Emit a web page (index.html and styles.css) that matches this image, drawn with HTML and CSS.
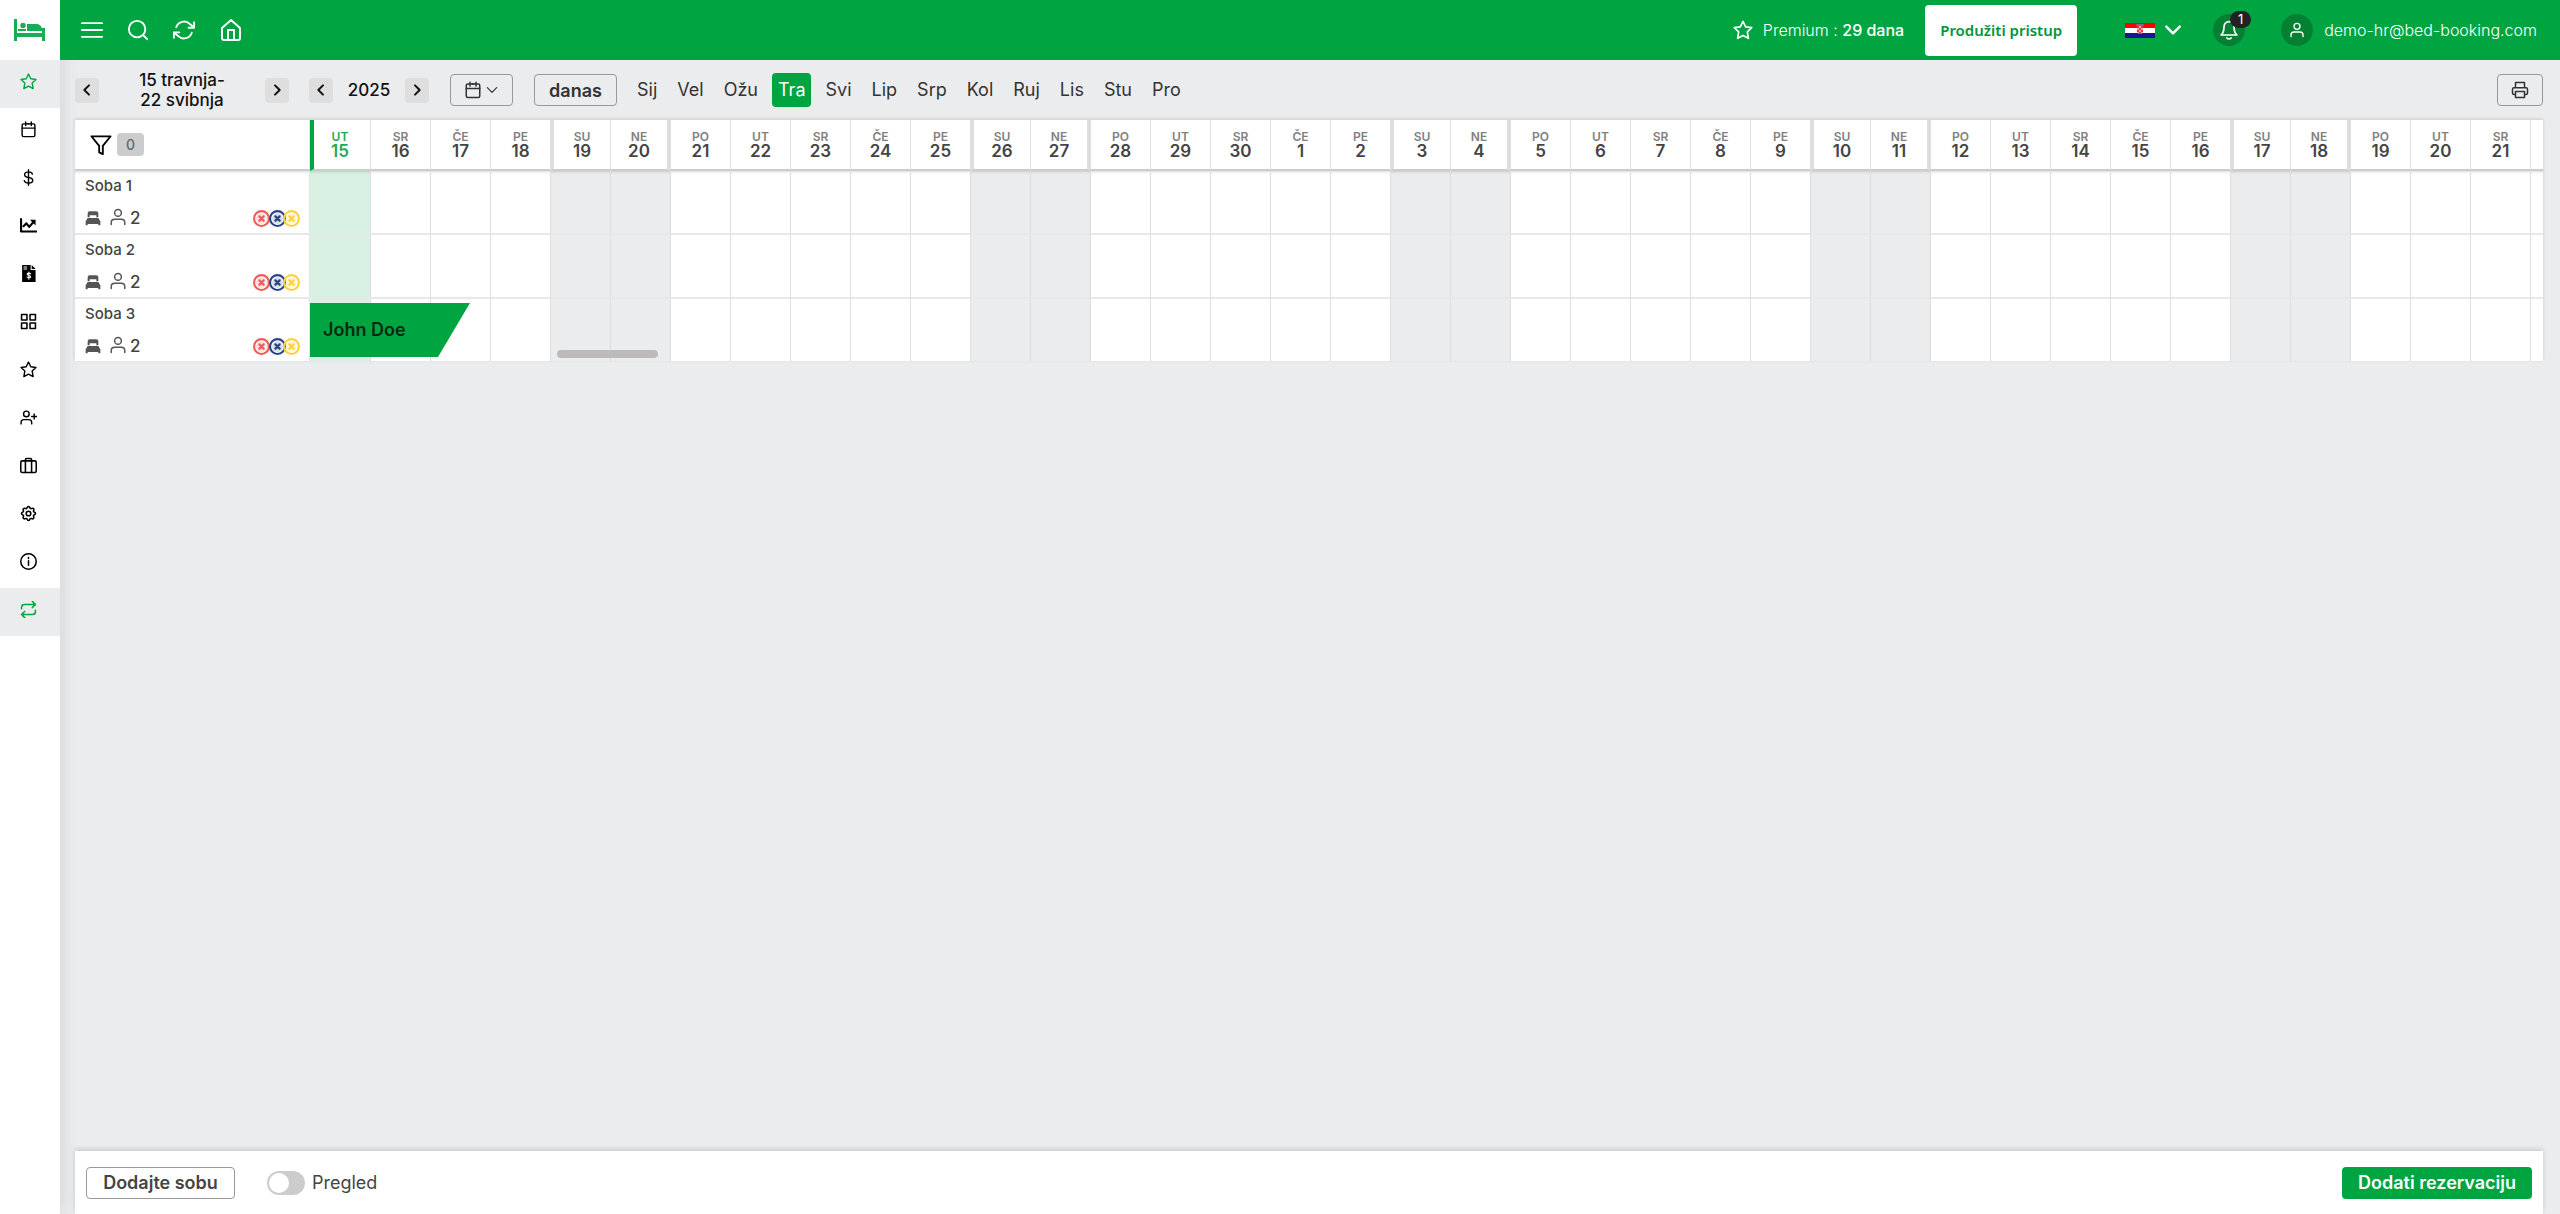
FILE: index.html
```
<!DOCTYPE html>
<html lang="hr">
<head>
  <meta charset="UTF-8">
  <meta name="viewport" content="width=device-width, initial-scale=1">
  <title>Bed Booking – Kalendar</title>
  <link rel="stylesheet" href="styles.css">
</head>
<body>

<aside class="sidebar">
  <a href="#" class="logo" aria-label="Bed Booking">
    <svg width="32" height="22" viewBox="0 0 32 22"><path d="M0 0h3v14h25V9h3v13h-3v-4H3v4H0zM4 10h8v2H4zM13 5h9c3 0 6 2 6 5v2H13z" fill="#1aac52"/><circle cx="9" cy="6.500" r="2.700" fill="#1aac52"/></svg>
  </a>
  <nav class="menu">
    <a href="#" class="active" aria-label="Novosti"><svg class="icon"><use href="#i-star"/></svg></a>
    <a href="#" aria-label="Kalendar"><svg class="icon"><use href="#i-calendar"/></svg></a>
    <a href="#" aria-label="Financije"><svg class="icon"><use href="#i-dollar"/></svg></a>
    <a href="#" aria-label="Statistika"><svg class="icon"><use href="#i-chart"/></svg></a>
    <a href="#" aria-label="Računi"><svg class="icon"><use href="#i-invoice"/></svg></a>
    <a href="#" aria-label="Objekti"><svg class="icon"><use href="#i-grid"/></svg></a>
    <a href="#" aria-label="Recenzije"><svg class="icon"><use href="#i-star"/></svg></a>
    <a href="#" aria-label="Gosti"><svg class="icon"><use href="#i-user-plus"/></svg></a>
    <a href="#" aria-label="Usluge"><svg class="icon"><use href="#i-case"/></svg></a>
    <a href="#" aria-label="Postavke"><svg class="icon"><use href="#i-gear"/></svg></a>
    <a href="#" aria-label="Informacije"><svg class="icon"><use href="#i-info"/></svg></a>
    <a href="#" class="active" aria-label="Sinkronizacija"><svg class="icon"><use href="#i-repeat"/></svg></a>
  </nav>
</aside>

<div class="page">
  <header class="topbar">
    <div class="top-left">
      <button aria-label="Izbornik"><svg width="22" height="22"><use href="#i-menu"/></svg></button>
      <button aria-label="Traži"><svg width="22" height="22"><use href="#i-search"/></svg></button>
      <button aria-label="Osvježi"><svg width="22" height="22"><use href="#i-refresh"/></svg></button>
      <button aria-label="Početna"><svg width="24" height="24"><use href="#i-home"/></svg></button>
    </div>
    <div class="top-right">
      <svg width="20" height="20"><use href="#i-star"/></svg>
      <span class="premium">Premium : <b>29 dana</b></span>
      <button class="extend">Produžiti pristup</button>
      <button class="lang" aria-label="Jezik">
        <svg width="30" height="15" viewBox="0 0 30 15"><path fill="#f00" d="M0 0h30v5H0z"/><path fill="#fff" d="M0 5h30v5H0z"/><path fill="#171796" d="M0 10h30v5H0z"/><path fill="#f6a5a5" d="M12 3h6v6q-1 2-3 2t-3-2z"/><path fill="#e33" d="M12 3h2v2h-2zM16 3h2v2h-2zM14 5h2v2h-2zM12 7h2v2h-2zM16 7h2v2h-2zM14 9h2v2h-2z"/><path d="M12 2h6" stroke="#7a6a90" stroke-width="2"/></svg>
        <svg width="20" height="20"><use href="#i-down"/></svg>
      </button>
      <button class="round bell" aria-label="Obavijesti"><svg width="20" height="20"><use href="#i-bell"/></svg><span class="count">1</span></button>
      <a href="#" class="account"><span class="round"><svg width="16" height="16"><use href="#i-user"/></svg></span>demo-hr@bed-booking.com</a>
    </div>
  </header>

  <main>
    <div class="toolbar">
      <div class="stepper range">
        <button class="step" aria-label="Prethodno"><svg width="16" height="16"><use href="#i-left"/></svg></button>
        <span>15 travnja-<br>22 svibnja</span>
        <button class="step" aria-label="Sljedeće"><svg width="16" height="16"><use href="#i-right"/></svg></button>
      </div>
      <div class="stepper year">
        <button class="step" aria-label="Prethodna godina"><svg width="16" height="16"><use href="#i-left"/></svg></button>
        <span>2025</span>
        <button class="step" aria-label="Sljedeća godina"><svg width="16" height="16"><use href="#i-right"/></svg></button>
      </div>
      <button class="outline pick" aria-label="Odaberi datum"><svg width="18" height="18"><use href="#i-calendar"/></svg><svg width="14" height="14"><use href="#i-down"/></svg></button>
      <button class="outline today-btn">danas</button>
      <nav class="months">
        <a href="#">Sij</a><a href="#">Vel</a><a href="#">Ožu</a><a href="#" class="current">Tra</a><a href="#">Svi</a><a href="#">Lip</a><a href="#">Srp</a><a href="#">Kol</a><a href="#">Ruj</a><a href="#">Lis</a><a href="#">Stu</a><a href="#">Pro</a>
      </nav>
      <button class="outline print" aria-label="Ispis"><svg width="18" height="18"><use href="#i-print"/></svg></button>
    </div>

    <div class="calendar">
      <table>
        <thead><tr id="days"></tr></thead>
        <tbody id="rooms"></tbody>
      </table>
      <div class="scroll-thumb"></div>
    </div>
  </main>

  <footer>
    <button class="outline add-room">Dodajte sobu</button>
    <label class="switch"><input type="checkbox"><span class="track"></span>Pregled</label>
    <button class="add-booking">Dodati rezervaciju</button>
  </footer>
</div>

<svg class="sprite" aria-hidden="true">
  <symbol id="i-star" viewBox="0 0 24 24"><path d="M12 1.500l3.200 6.700 7.300.9-5.300 5.100 1.300 7.800L12 18.500 5.500 22l1.300-7.800L1.500 9.100l7.300-.9z"/></symbol>
  <symbol id="i-calendar" viewBox="0 0 24 24"><rect x="3" y="4" width="18" height="18" rx="2"/><path d="M3 10h18M8 1.500v5M16 1.500v5M11 4h2"/></symbol>
  <symbol id="i-dollar" viewBox="0 0 24 24"><path d="M12 1v22M17.500 7c-.5-2-2.500-3-5.500-3-3.500 0-5.500 1.500-5.500 4s2 3.500 5.500 4 6 1.500 6 4-2.500 4-6 4-5.500-1.500-6-3.500"/></symbol>
  <symbol id="i-chart" viewBox="0 0 24 24"><path d="M1.500 3v17.500H24M5 13l4-4 4 5 6-7" stroke-width="3"/><path d="M14 4h8v8z" fill="currentColor" stroke="none"/></symbol>
  <symbol id="i-invoice" viewBox="0 0 24 24"><path fill="currentColor" stroke="none" fill-rule="evenodd" d="M3 0h12v7h7v17H3zM5 2v1.500h5V2zM5 5v1.500h5V5zM16.500 0L22 5.500h-5.500z"/><path d="M15 12.500c-1-1.500-5-1.500-5 .5s5 1.500 5 3.500-4 2-5 .5M12.500 10v10" stroke="#fff" stroke-width="1.500"/></symbol>
  <symbol id="i-grid" viewBox="1 1 22 22"><path d="M3 3h7v7H3zM14 3h7v7h-7zM3 14h7v7H3zM14 14h7v7h-7z"/></symbol>
  <symbol id="i-user-plus" viewBox="0 0 24 24"><circle cx="9" cy="7" r="4"/><path d="M1.500 21v-2c0-2.500 1.500-4 4-4h7c2.500 0 4 1.500 4 4v2M20 7v7M16.500 10.500h7"/></symbol>
  <symbol id="i-case" viewBox="1 1 22 22"><rect x="2" y="6" width="20" height="15" rx="2"/><path d="M8 21V4.500A1.500 1.500 0 0 1 9.500 3h5A1.500 1.500 0 0 1 16 4.500V21"/></symbol>
  <symbol id="i-gear" viewBox="1 1 22 22"><circle cx="12" cy="12" r="3"/><path d="M10.300 3.300c.4-1.700 3-1.700 3.400 0a1.700 1.700 0 0 0 2.600 1.100c1.600-.9 3.300.8 2.400 2.400a1.700 1.700 0 0 0 1 2.500c1.800.5 1.800 3 0 3.400a1.700 1.700 0 0 0-1 2.600c.9 1.500-.8 3.300-2.400 2.400a1.700 1.700 0 0 0-2.600 1c-.4 1.800-3 1.800-3.400 0a1.700 1.700 0 0 0-2.600-1c-1.500.9-3.300-.9-2.400-2.400a1.700 1.700 0 0 0-1-2.600c-1.800-.4-1.800-3 0-3.400a1.700 1.700 0 0 0 1-2.500c-.9-1.600.9-3.300 2.400-2.400a1.700 1.700 0 0 0 2.600-1.100z" transform="translate(0 1)"/></symbol>
  <symbol id="i-info" viewBox="1 1 22 22"><circle cx="12" cy="12" r="10"/><path d="M12 11v6M12 7v1"/></symbol>
  <symbol id="i-repeat" viewBox="1 1 22 22"><path d="M17 1.500l4 4-4 4M21 5.500H7c-2.500 0-4 1.500-4 4V11M7 22.500l-4-4 4-4M3 18.500h14c2.500 0 4-1.500 4-4V13"/></symbol>
  <symbol id="i-menu" viewBox="0 0 24 24"><path d="M1 4.500h22M1 12h22M1 19.500h22"/></symbol>
  <symbol id="i-search" viewBox="0 0 24 24"><circle cx="11" cy="11" r="9"/><path d="M18 18l4 4"/></symbol>
  <symbol id="i-refresh" viewBox="0 0 24 24"><path d="M23 3.500v6h-6M1 20.500v-6h6M3.500 9a9 9 0 0 1 15-3.500L23 9.500M1 14.500l4.500 4A9 9 0 0 0 20.500 15"/></symbol>
  <symbol id="i-home" viewBox="0 0 24 24"><path d="M3 10l9-8 9 8v10a2 2 0 0 1-2 2H5a2 2 0 0 1-2-2zM9 22V12h6v10"/></symbol>
  <symbol id="i-down" viewBox="0 0 24 24"><path d="M4 8l8 8 8-8"/></symbol>
  <symbol id="i-left" viewBox="0 0 24 24"><path d="M15 5l-7 7 7 7"/></symbol>
  <symbol id="i-right" viewBox="0 0 24 24"><path d="M9 5l7 7-7 7"/></symbol>
  <symbol id="i-bell" viewBox="0 0 24 24"><path d="M18 8A6 6 0 0 0 6 8c0 7-3.500 10-3.500 10h19S18 15 18 8M9.500 21.500c1 1.500 4 1.500 5 0"/></symbol>
  <symbol id="i-user" viewBox="0 0 24 24"><circle cx="12" cy="6.500" r="4.500"/><path d="M3 22v-2.500c0-2.500 2-4.500 4.500-4.500h9c2.500 0 4.500 2 4.500 4.500V22"/></symbol>
  <symbol id="i-print" viewBox="0 0 24 24"><path d="M6 9V2h12v7M6 18H4a2 2 0 0 1-2-2v-5a2 2 0 0 1 2-2h16a2 2 0 0 1 2 2v5a2 2 0 0 1-2 2h-2M6 14h12v8H6z"/></symbol>
  <symbol id="i-filter" viewBox="0 0 24 24"><path d="M1.500 2.500h21L14 13v9l-4-2v-7z"/></symbol>
  <symbol id="i-bed" viewBox="0 0 24 24"><path fill="currentColor" stroke="none" d="M4 11V5q0-3 3-3h10q3 0 3 3v6h-3V8H7v3zM4 12h16l3 5v6h-3v-2H4v2H1v-6z"/></symbol>
  <symbol id="i-closed" viewBox="0 0 16 16"><circle cx="8" cy="8" r="7" stroke-width="2"/><circle cx="8" cy="8" r="5" fill="currentColor" fill-opacity=".2" stroke="none"/><path d="M6 6l4 4M10 6l-4 4" stroke-width="2"/></symbol>
</svg>

<script>
  const rooms = ['Soba 1', 'Soba 2', 'Soba 3'];
  const names = ['NE', 'PO', 'UT', 'SR', 'ČE', 'PE', 'SU'];
  const days = [];
  for (let i = 0; i < 37; i++) {
    const d = new Date(2025, 3, 15 + i);
    let cls = 'day';
    if (i === 0) cls += ' today';
    if (d.getDay() === 6) cls += ' sat';
    if (d.getDay() === 0) cls += ' sun';
    days.push({ name: names[d.getDay()], num: d.getDate(), cls: cls });
  }

  let head = `<th class="room-col"><button class="filter" aria-label="Filtri">
    <svg width="22" height="22"><use href="#i-filter"/></svg><span>0</span></button></th>`;
  days.forEach(d => {
    head += `<th class="${d.cls}"><small>${d.name}</small>${d.num}</th>`;
  });
  document.getElementById('days').innerHTML = head + '<th></th>';

  let body = '';
  rooms.forEach((room, r) => {
    body += `<tr><th class="room-col"><div class="room">
      <span>${room}</span>
      <div class="room-info">
        <svg width="16" height="16"><use href="#i-bed"/></svg>
        <svg width="18" height="18"><use href="#i-user"/></svg>
        <span class="beds">2</span>
        <svg width="17" height="17" class="red"><use href="#i-closed"/></svg>
        <svg width="17" height="17" class="blue"><use href="#i-closed"/></svg>
        <svg width="17" height="17" class="yellow"><use href="#i-closed"/></svg>
      </div></div></th>`;
    days.forEach((d, i) => {
      const booking = r === 2 && i === 0 ? '<a href="#" class="booking">John Doe</a>' : '';
      body += `<td class="${d.cls}">${booking}</td>`;
    });
    body += '<td></td></tr>';
  });
  document.getElementById('rooms').innerHTML = body;
</script>

</body>
</html>
```
FILE: styles.css
```
* { box-sizing: border-box; }
body {
  margin: 0;
  display: flex;
  min-height: 100vh;
  background: #ebecee;
  color: #444;
  font-family: Inter, "Open Sans", sans-serif;
  font-size: 16px;
}
button { font: inherit; color: inherit; border: 0; background: none; padding: 0; cursor: pointer; }
a { color: inherit; text-decoration: none; }
svg { display: block; flex: none; fill: none; stroke: currentColor; stroke-width: 2; stroke-linecap: round; stroke-linejoin: round; }
.sprite { position: absolute; width: 0; height: 0; }
.logo svg, .lang svg:first-child { stroke: none; }

/* sidebar */
.sidebar { width: 60px; flex: none; background: #fff; color: #000; box-shadow: 0 0 20px rgba(0,0,0,.12); }
.logo { display: flex; align-items: center; justify-content: center; height: 60px; }
.menu a { display: flex; align-items: center; justify-content: center; height: 48px; padding: 0 4px 6px 0; }
.menu .active { background: #ebecee; color: #00a541; }
.icon { width: 17px; height: 17px; }

.page { flex: 1; min-width: 0; display: flex; flex-direction: column; }

/* top bar */
.topbar { display: flex; justify-content: space-between; align-items: center; height: 60px; padding: 0 23px 0 21px; background: #00a541; color: #fff; }
.top-left { display: flex; align-items: center; gap: 24px; }
.top-right { display: flex; align-items: center; white-space: nowrap; }
.premium { margin: 0 21px 0 10px; font-weight: 300; }
.premium b { font-weight: 500; }
.extend { height: 51px; width: 152px; background: #fff; border-radius: 4px; color: #00953b; font-family: "Noto Sans", sans-serif; font-size: 15px; font-weight: 600; }
.lang { display: flex; align-items: center; gap: 8px; margin: 0 30px 0 48px; }
.lang svg:last-child { stroke-width: 3; }
.round { display: flex; align-items: center; justify-content: center; width: 32px; height: 32px; border-radius: 50%; background: #058033; }
.bell { position: relative; margin-right: 36px; }
.count { position: absolute; left: 17px; top: -3px; width: 21px; height: 17px; border-radius: 9px; background: #222; font-size: 13px; line-height: 17px; }
.account { display: flex; align-items: center; gap: 11px; font-weight: 300; }

/* date toolbar */
main { flex: 1; padding: 0 17px 0 15px; }
.toolbar { display: flex; align-items: center; height: 60px; color: #333; }
.stepper { display: flex; align-items: center; justify-content: space-between; color: #111; font-size: 17px; font-weight: 500; text-align: center; line-height: 20px; }
.range { width: 214px; margin-right: 20px; }
.year { width: 120px; margin-right: 21px; }
.step { display: flex; align-items: center; justify-content: center; width: 24px; height: 25px; border-radius: 4px; background: #dedede; }
.step svg { stroke-width: 3; }
.outline { border: 1px solid #999; border-radius: 4px; height: 32px; display: flex; align-items: center; justify-content: center; }
.pick { width: 63px; gap: 3px; margin-right: 21px; }
.today-btn { width: 83px; font-size: 18px; font-weight: 600; }
.months { display: flex; gap: 8px; margin-left: 14px; }
.months a { padding: 0 6px; line-height: 34px; font-size: 18px; border-radius: 4px; }
.months .current { background: #00a541; color: #fff; }
.print { width: 46px; margin-left: auto; }

/* calendar */
.calendar { position: relative; overflow: hidden; background: #fff; box-shadow: 0 -1px 3px rgba(0,0,0,.15); }
table { width: 100%; table-layout: fixed; border-collapse: separate; border-spacing: 0; }
th, td { padding: 0; }
.room-col { width: 235px; border-right: 1px solid #e6e6e6; text-align: left; }
.day { width: 60px; border-left: 1px solid #dedede; }
.day + th:not(.day), .day + td:not(.day) { border-left: 1px solid #dedede; }
thead th { height: 51px; border-bottom: 2px solid #ccc; font-weight: 600; font-size: 17px; line-height: 16px; }
thead small { display: block; color: #808080; font-size: 12px; line-height: 13px; }
thead .today { border-left: 4px solid #00a541; padding-right: 4px; color: #1aac52; }
thead .today small { color: #1aac52; }
thead .sat { border-left: 4px solid #dedede; }
thead .sun { border-right: 3px solid #dedede; }
tbody th, tbody td { height: 64px; border-bottom: 2px solid #e8e8e8; }
tbody tr:first-child > * { box-shadow: inset 0 3px 3px -2px rgba(0,0,0,.15); }
tbody tr:last-child > * { height: 62px; border-bottom: 0; }
tbody .today { position: relative; border-left: 0; background: #d9f1e2; }
tbody .sat, tbody .sun { background: #ebecee; }

.filter { display: flex; align-items: center; gap: 5px; margin-left: 15px; color: #000; }
.filter span { width: 27px; border-radius: 4px; background: #ccc; color: #666; font-size: 14px; line-height: 23px; text-align: center; font-weight: 500; }
.room { display: flex; flex-direction: column; justify-content: space-between; height: 60px; padding: 4px 9px 4px 10px; font-size: 15px; font-weight: 500; line-height: 20px; }
.room-info { display: flex; align-items: center; color: #555; }
.room-info svg:nth-child(2) { margin: 0 3px 2px 8px; }
.beds { margin-right: auto; font-size: 17px; color: #444; }
.red { color: #ee5a5a; }
.blue { color: #2a4585; margin-left: -1px; }
.yellow { color: #ffd041; margin-left: -3px; }

.booking {
  position: absolute;
  left: 0;
  top: 4px;
  width: 160px;
  z-index: 1;
  padding-left: 13px;
  background: #00a541;
  color: #002b11;
  font-size: 18px;
  font-weight: 600;
  line-height: 54px;
  clip-path: polygon(0 0, 100% 0, 80% 100%, 0 100%);
}
.scroll-thumb { position: absolute; left: 482px; bottom: 3px; width: 101px; height: 8px; border-radius: 4px; background: #bbb; }

/* bottom bar */
footer { display: flex; align-items: center; height: 63px; margin: 0 17px 0 15px; padding: 0 11px; background: #fff; box-shadow: 0 -2px 5px rgba(0,0,0,.15); }
.add-room { width: 149px; font-size: 18px; font-weight: 600; }
.switch { display: flex; align-items: center; gap: 7px; margin-left: 32px; font-size: 18px; cursor: pointer; }
.switch input { position: absolute; opacity: 0; }
.track { width: 38px; height: 24px; padding: 2px; border-radius: 12px; background: #ccc; }
.track::before { content: ""; display: block; width: 20px; height: 20px; border-radius: 50%; background: #fff; }
.switch input:checked + .track { background: #00a541; }
.switch input:checked + .track::before { margin-left: 14px; }
.add-booking { width: 190px; height: 32px; margin-left: auto; border-radius: 4px; background: #00a541; color: #fff; font-size: 18px; font-weight: 600; }
```
